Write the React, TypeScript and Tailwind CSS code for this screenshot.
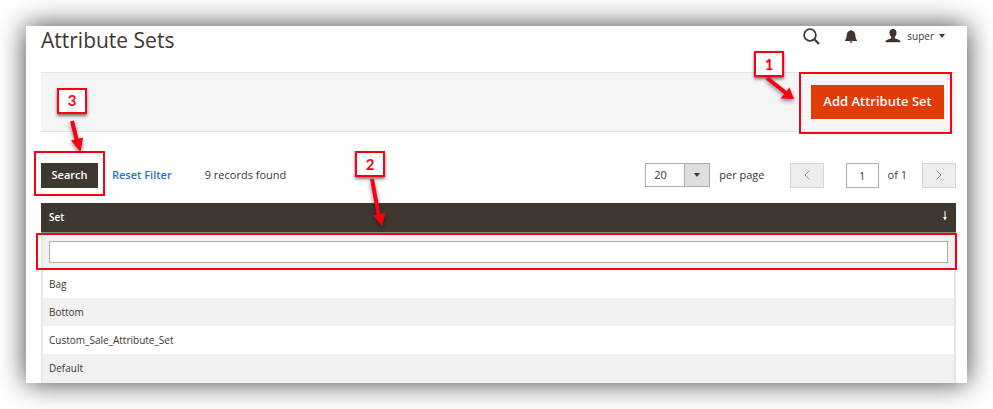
import React from 'react';

type CalloutProps = { label: string; className: string; children: React.ReactNode };

const rows = ['Bag', 'Bottom', 'Custom_Sale_Attribute_Set', 'Default'];

function Callout({ label, className, children }: CalloutProps) {
  return (
    <div className={`pointer-events-none absolute z-10 ${className}`}>
      <div className="flex h-[26px] w-[30px] items-center justify-center border-2 border-[#fb0012] bg-white font-['Lato',sans-serif] text-[15px] font-bold text-[#fb0012] shadow-[0_2px_3px_rgba(0,0,0,0.55)]">
        {label}
      </div>
      {children}
    </div>
  );
}

function Arrow({ shaft, head, className }: { shaft: string; head: string; className: string }) {
  return (
    <svg
      className={`absolute overflow-visible drop-shadow-[0_2px_2px_rgba(0,0,0,0.5)] ${className}`}
      width="30"
      height="50"
      fill="#fb0012"
      aria-hidden="true"
    >
      <path d={shaft} stroke="#fb0012" strokeWidth="4" fill="none" />
      <path d={head} />
    </svg>
  );
}

function TopBar() {
  return (
    <header className="flex h-[46px] items-start justify-between">
      <h1 className="text-[21px] leading-7 text-[#41362f]">Attribute Sets</h1>
      <div className="flex h-5 items-center pr-[11px]">
        <button type="button" aria-label="Search" className="mr-6 text-[#41362f]">
          <svg width="17" height="17" viewBox="0 0 17 17" fill="none" stroke="currentColor">
            <circle cx="7" cy="7" r="5.9" strokeWidth="1.7" />
            <path d="M11.300 11.300l4.700 4.700" strokeWidth="2.2" />
          </svg>
        </button>
        <button type="button" aria-label="Notifications" className="mr-[27px] text-[#41362f]">
          <svg width="14" height="14" viewBox="0 0 14 14" fill="currentColor">
            <path d="M6.200 1.600a.9.9 0 0 1 1.600 0C10.200 2.200 11.200 4 11.400 6.500c.1 2.200.5 3.600 1.600 4.700v.8H1v-.8c1.100-1.100 1.500-2.500 1.600-4.700C2.800 4 3.800 2.200 6.200 1.600zM5.600 12.600h2.800a1.400 1.400 0 0 1-2.800 0z" />
          </svg>
        </button>
        <button type="button" className="flex items-center text-[10px] text-[#41362f]">
          <svg width="16" height="14" viewBox="0 0 16 14" fill="currentColor" className="mr-[6px]">
            <path d="M8 0c2.500 0 3.500 1.400 3.500 3.700 0 1.900-.8 3.200-1.700 4.100v1.500c0 .5 1.600.6 3.200 1.100 1.700.5 2.500 1.200 2.600 2.900H.4c.1-1.700.9-2.400 2.600-2.900 1.600-.5 3.200-.6 3.200-1.100V7.800C5.300 6.900 4.500 5.600 4.500 3.700 4.500 1.400 5.500 0 8 0z" />
          </svg>
          super
          <svg width="6" height="4" viewBox="0 0 6 4" fill="currentColor" className="ml-[5px]">
            <path d="M0 0h6L3 4z" />
          </svg>
        </button>
      </div>
    </header>
  );
}

function ActionBar() {
  return (
    <div className="flex h-[60px] items-center justify-end border-y border-[#e3e3e3] bg-[#f5f5f5] pr-3">
      <div className="relative">
        <button type="button" className="block h-[34px] w-[133px] bg-[#e33b06] text-[13px] font-semibold whitespace-nowrap text-white">
          Add Attribute Set
        </button>
        <div className="pointer-events-none absolute -top-[13px] -right-2 -bottom-[15px] -left-3 border-2 border-[#fb0012]" />
        <Callout label="1" className="-top-[34px] -left-[57px]">
          <Arrow className="top-[27px] left-3" shaft="M1 0L20 15" head="M28 21L14.500 20.500L23.500 9.500z" />
        </Callout>
      </div>
    </div>
  );
}

function Toolbar() {
  return (
    <div className="flex h-[71px] items-center pt-4 pb-[1px] text-[11px] text-[#41362f]">
      <div className="relative">
        <button type="button" className="block h-[25px] w-[57px] bg-[#3e3831] font-semibold text-white">
          Search
        </button>
        <div className="pointer-events-none absolute -inset-x-[7px] -top-3 -bottom-2 border-2 border-[#fb0012]" />
        <Callout label="3" className="-top-[75px] left-4">
          <Arrow className="top-[33px] left-[14px]" shaft="M1 0L6 20" head="M9.500 31L0 19.500L12 16.500z" />
        </Callout>
      </div>
      <button type="button" className="ml-[14px] font-semibold text-[#1f72d6]">
        Reset Filter
      </button>
      <span className="ml-[33px]">9 records found</span>
      <div className="ml-auto flex items-center">
        <div className="relative">
          <select
            id="page-size"
            defaultValue="20"
            className="block h-6 w-[65px] appearance-none border border-[#adadad] bg-white pl-2 text-[11px]"
          >
            <option>20</option>
            <option>30</option>
            <option>50</option>
          </select>
          <span className="pointer-events-none absolute top-0 right-0 flex h-6 w-[26px] items-center justify-center border border-[#adadad] bg-[#dedede]">
            <svg width="6" height="4" viewBox="0 0 6 4" fill="#41362f">
              <path d="M0 0h6L3 4z" />
            </svg>
          </span>
        </div>
        <label htmlFor="page-size" className="ml-[9px]">
          per page
        </label>
        <button type="button" aria-label="Previous page" disabled className="ml-[25px] flex h-[25px] w-[34px] items-center justify-center border border-[#d6d6d6] bg-[#ededed]">
          <svg width="6" height="10" viewBox="0 0 6 10" fill="none" stroke="#8f8f8f">
            <path d="M5.500.5L1 5l4.500 4.500" />
          </svg>
        </button>
        <input
          id="page-number"
          defaultValue="1"
          className="ml-[22px] h-[25px] w-[33px] border border-[#adadad] bg-white text-center text-[11px]"
        />
        <label htmlFor="page-number" className="ml-[9px]">
          of 1
        </label>
        <button type="button" aria-label="Next page" disabled className="ml-[15px] flex h-[25px] w-[34px] items-center justify-center border border-[#d6d6d6] bg-[#ededed]">
          <svg width="6" height="10" viewBox="0 0 6 10" fill="none" stroke="#8f8f8f">
            <path d="M.5.5L5 5 .5 9.500" />
          </svg>
        </button>
      </div>
    </div>
  );
}

function SetsTable() {
  return (
    <div className="relative">
      <table className="w-full border-separate border-spacing-0 text-left text-[10px] text-[#41362f]">
        <thead>
          <tr>
            <th className="h-[30px] border-b border-[#8a8a85] bg-[#3e3831] px-2 py-0 font-semibold text-white">
              <div className="flex items-center justify-between">
                <span>Set</span>
                <svg width="6" height="10" viewBox="0 0 6 10" className="mb-1">
                  <path d="M2.500 0h1v6H5L3 9.500 1 6h1.500z" fill="#fff" />
                </svg>
              </div>
            </th>
          </tr>
          <tr>
            <td className="relative h-[37px] border-x-2 border-[#e6e6e6] bg-[#f1f1f1] px-[6px] py-0">
              <input aria-label="Filter by set" className="block h-[22px] w-full border border-[#adadad] bg-white px-2" />
              <div className="pointer-events-none absolute top-0 -right-[3px] bottom-0 -left-[7px] border-2 border-[#fb0012]" />
            </td>
          </tr>
        </thead>
        <tbody>
          {rows.map((row) => (
            <tr key={row} className="h-7 odd:bg-white even:bg-[#f1f1f1] last:h-[29px]">
              <td className="border-x-2 border-[#e6e6e6] px-[6px] py-0">{row}</td>
            </tr>
          ))}
        </tbody>
      </table>
      <Callout label="2" className="-top-[52px] left-[314px]">
        <Arrow className="top-[28px] left-4" shaft="M1 0L8 38" head="M11 47L2 36.500L14.500 34z" />
      </Callout>
    </div>
  );
}

export default function App() {
  return (
    <div className="overflow-hidden bg-white p-[26px] font-['Open_Sans','Noto_Sans',sans-serif]">
      <main className="bg-white pr-[11px] pl-[15px] shadow-[0_0_26px_rgba(0,0,0,0.75)]">
        <TopBar />
        <ActionBar />
        <Toolbar />
        <SetsTable />
      </main>
    </div>
  );
}
